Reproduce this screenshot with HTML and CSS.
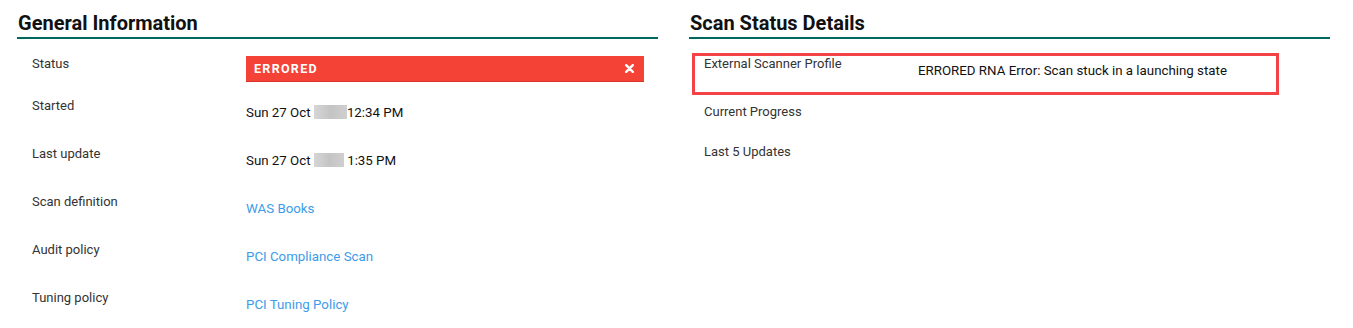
FILE: index.html
```html
<!DOCTYPE html>
<html lang="en">
<head>
    <meta charset="UTF-8">
    <title>Scan Details</title>
    <link rel="stylesheet" href="styles.css">
</head>
<body>
  <div class="page">
      <section class="panel">
          <h2 class="panel-title">General Information</h2>
          <div class="info-row row-status">
              <p class="info-label">Status</p>
              <div class="status-badge">
                  <span>ERRORED</span>
                  <svg class="badge-close" width="9" height="9" viewBox="0 0 9 9">
                      <path d="M1.2 1.2 L7.8 7.8 M7.8 1.2 L1.2 7.8" stroke="#fff" stroke-width="2.4" stroke-linecap="round"/>
                  </svg>
              </div>
          </div>
          <div class="info-row">
              <p class="info-label">Started</p>
              <p class="info-value">Sun 27 Oct <span class="blurred"></span>12:34 PM</p>
          </div>
          <div class="info-row">
              <p class="info-label">Last update</p>
              <p class="info-value">Sun 27 Oct <span class="blurred short"></span> 1:35 PM</p>
          </div>
          <div class="info-row">
              <p class="info-label">Scan definition</p>
              <p class="info-value"><a href="#">WAS Books</a></p>
          </div>
          <div class="info-row">
              <p class="info-label">Audit policy</p>
              <p class="info-value"><a href="#">PCI Compliance Scan</a></p>
          </div>
          <div class="info-row">
              <p class="info-label">Tuning policy</p>
              <p class="info-value"><a href="#">PCI Tuning Policy</a></p>
          </div>
      </section>

      <section class="panel">
          <h2 class="panel-title">Scan Status Details</h2>
          <div class="info-row row-highlight">
              <p class="info-label">External Scanner Profile</p>
              <p class="info-value">ERRORED RNA Error: Scan stuck in a launching state</p>
          </div>
          <div class="info-row row-short">
              <p class="info-label">Current Progress</p>
          </div>
          <div class="info-row row-short">
              <p class="info-label">Last 5 Updates</p>
          </div>
      </section>
  </div>
</body>
</html>
```

FILE: styles.css
```css
/* General */

*
{
    box-sizing: border-box;
    margin: 0;
    padding: 0;
    font-family: Roboto, "Liberation Sans", Arial, sans-serif;
}
body
{
    background-color: #fff;
    color: #222;
}

/* Layout */

.page
{
    display: grid;
    grid-template-columns: 641px 641px;
    column-gap: 31px;
    padding: 11px 0 0 17px;
}
.panel-title
{
    font-size: 20px;
    font-weight: 700;
    color: #111;
    line-height: 24px;
    padding-left: 1px;
    padding-bottom: 2px;
    border-bottom: 2px solid #00695c;
    margin-bottom: 17px;
}

/* Rows */

.info-row
{
    display: grid;
    grid-template-columns: 214px 1fr;
    height: 48px;
    padding-left: 15px;
    font-size: 13px;
    line-height: 16px;
}
.row-status
{
    height: 42px;
    padding-right: 14px;
}
.row-short
{
    height: 40px;
}
.info-label
{
    color: #333;
}
.info-value
{
    padding-top: 7px;
    font-size: 13.3px;
    color: #111;
}
.info-value a
{
    color: #3d9be9;
    text-decoration: none;
}
.blurred
{
    display: inline-block;
    width: 33px;
    height: 14px;
    vertical-align: -2px;
    background: linear-gradient(90deg, #d6d6d6, #c4c4c4 50%, #cfcfcf);
    filter: blur(0.6px);
}
.blurred.short
{
    width: 30px;
}

/* Status badge */

.status-badge
{
    display: flex;
    justify-content: space-between;
    align-items: center;
    height: 26px;
    padding: 0 10px 0 8px;
    background-color: #f44336;
    border-bottom: 1px solid #d8382c;
    color: #fff;
    font-size: 12.5px;
    font-weight: 700;
    letter-spacing: 1.3px;
}

/* Highlight box */

.row-highlight
{
    height: 42px;
    margin: -3px 51px 9px 3px;
    padding: 0 0 0 9px;
    border: 3px solid #f44347;
}
.row-highlight .info-value
{
    padding-top: 7px;
}
```
